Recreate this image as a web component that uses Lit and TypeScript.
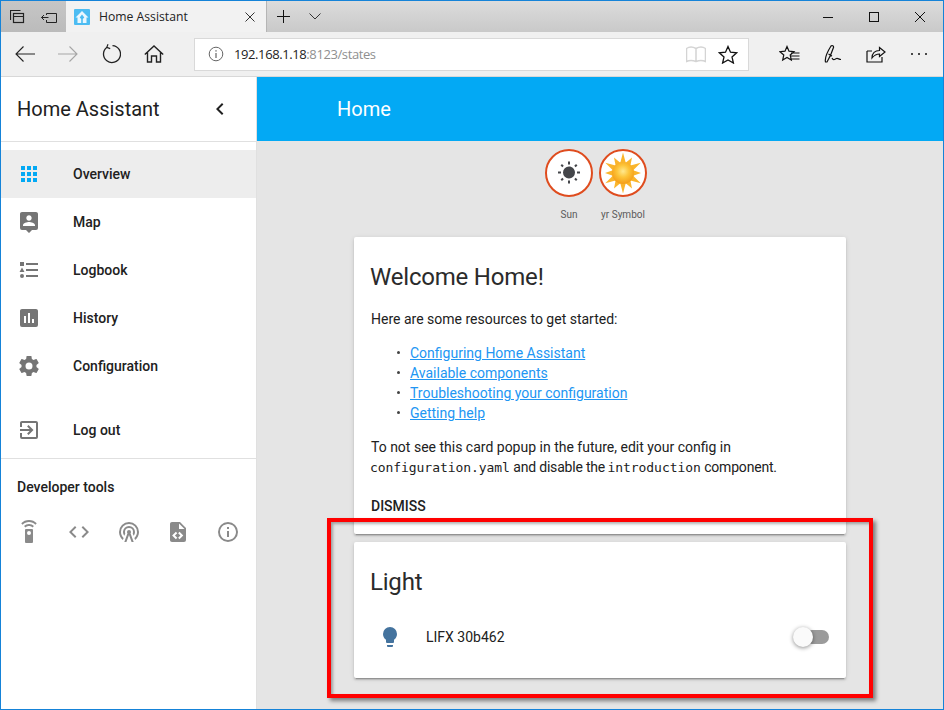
import { LitElement, html, css, svg } from "lit";
import { customElement } from "lit/decorators.js";

const P = {
  apps: "M16,20H20V16H16M16,14H20V10H16M10,8H14V4H10M16,8H20V4H16M10,14H14V10H10M4,14H8V10H4M4,20H8V16H4M10,20H14V16H10M4,8H8V4H4V8Z",
  map: "M18,16H6V15.1C6,13.1 10,12 12,12C14,12 18,13.1 18,15.1M12,5.3C13.5,5.3 14.7,6.5 14.7,8C14.7,9.5 13.5,10.7 12,10.7C10.5,10.7 9.3,9.5 9.3,8C9.3,6.5 10.5,5.3 12,5.3M19,2H5C3.89,2 3,2.89 3,4V18A2,2 0 0,0 5,20H9L12,23L15,20H19A2,2 0 0,0 21,18V4C21,2.89 20.1,2 19,2Z",
  log: "M5,9.5L7.5,14H2.5L5,9.5M3,4H7V8H3V4M5,20A2,2 0 0,0 7,18A2,2 0 0,0 5,16A2,2 0 0,0 3,18A2,2 0 0,0 5,20M9,5V7H21V5H9M9,19H21V17H9V19M9,13H21V11H9V13Z",
  hist: "M17,17H15V13H17M13,17H11V7H13M9,17H7V10H9M19,3H5C3.89,3 3,3.89 3,5V19A2,2 0 0,0 5,21H19A2,2 0 0,0 21,19V5C21,3.89 20.1,3 19,3Z",
  gear: "M12,15.5A3.5,3.5 0 0,1 8.5,12A3.5,3.5 0 0,1 12,8.5A3.5,3.5 0 0,1 15.5,12A3.5,3.5 0 0,1 12,15.5M19.43,12.97C19.47,12.65 19.5,12.33 19.5,12C19.5,11.67 19.47,11.34 19.43,11L21.54,9.37C21.73,9.22 21.78,8.95 21.66,8.73L19.66,5.27C19.54,5.05 19.27,4.96 19.05,5.05L16.56,6.05C16.04,5.66 15.5,5.32 14.87,5.07L14.5,2.42C14.46,2.18 14.25,2 14,2H10C9.75,2 9.54,2.18 9.5,2.42L9.13,5.07C8.5,5.32 7.96,5.66 7.44,6.05L4.95,5.05C4.73,4.96 4.46,5.05 4.34,5.27L2.34,8.73C2.21,8.95 2.27,9.22 2.46,9.37L4.57,11C4.53,11.34 4.5,11.67 4.5,12C4.5,12.33 4.53,12.65 4.57,12.97L2.46,14.63C2.27,14.78 2.21,15.05 2.34,15.27L4.34,18.73C4.46,18.95 4.73,19.03 4.95,18.95L7.44,17.94C7.96,18.34 8.5,18.68 9.13,18.93L9.5,21.58C9.54,21.82 9.75,22 10,22H14C14.25,22 14.46,21.82 14.5,21.58L14.87,18.93C15.5,18.67 16.04,18.34 16.56,17.94L19.05,18.95C19.27,19.03 19.54,18.95 19.66,18.73L21.66,15.27C21.78,15.05 21.73,14.78 21.54,14.63L19.43,12.97Z",
  exit: "M19,3H5C3.89,3 3,3.89 3,5V9H5V5H19V19H5V15H3V19A2,2 0 0,0 5,21H19A2,2 0 0,0 21,19V5C21,3.89 20.1,3 19,3M10.08,15.58L11.5,17L16.5,12L11.5,7L10.08,8.41L12.67,11H3V13H12.67L10.08,15.58Z",
  remote: "M12,0C8.96,0 6.21,1.23 4.22,3.22L5.63,4.63C7.26,3 9.5,2 12,2C14.5,2 16.74,3 18.36,4.64L19.77,3.23C17.79,1.23 15.04,0 12,0M7.05,6.05L8.46,7.46C9.37,6.56 10.62,6 12,6C13.38,6 14.63,6.56 15.54,7.46L16.95,6.05C15.68,4.78 13.93,4 12,4C10.07,4 8.32,4.78 7.05,6.05M12,15A2,2 0 0,1 10,13A2,2 0 0,1 12,11A2,2 0 0,1 14,13A2,2 0 0,1 12,15M15,9H9A1,1 0 0,0 8,10V22A1,1 0 0,0 9,23H15A1,1 0 0,0 16,22V10A1,1 0 0,0 15,9Z",
  code: "M14.6,16.6L19.2,12L14.6,7.4L16,6L22,12L16,18L14.6,16.6M9.4,16.6L4.8,12L9.4,7.4L8,6L2,12L8,18L9.4,16.6Z",
  tower: "M12,10A2,2 0 0,1 14,12C14,12.5 13.82,12.94 13.53,13.29L16.7,22H14.57L12,14.93L9.43,22H7.3L10.47,13.29C10.18,12.94 10,12.5 10,12A2,2 0 0,1 12,10M12,8A4,4 0 0,0 8,12C8,12.5 8.1,13 8.28,13.46L7.4,15.86C6.53,14.81 6,13.47 6,12A6,6 0 0,1 12,6A6,6 0 0,1 18,12C18,13.47 17.47,14.81 16.6,15.86L15.72,13.46C15.9,13 16,12.5 16,12A4,4 0 0,0 12,8M12,4A8,8 0 0,0 4,12C4,14.36 5,16.5 6.64,17.94L5.92,19.94C3.54,18.11 2,15.23 2,12A10,10 0 0,1 12,2A10,10 0 0,1 22,12C22,15.23 20.46,18.11 18.08,19.94L17.36,17.94C19,16.5 20,14.36 20,12A8,8 0 0,0 12,4Z",
  xml: "M13,9H18.5L13,3.5V9M6,2H14L20,8V20A2,2 0 0,1 18,22H6C4.89,22 4,21.1 4,20V4C4,2.89 4.89,2 6,2M6.12,15.5L9.86,19.24L11.28,17.83L8.95,15.5L11.28,13.17L9.86,11.76L6.12,15.5M17.28,15.5L13.54,11.76L12.12,13.17L14.45,15.5L12.12,17.83L13.54,19.24L17.28,15.5Z",
  info: "M11,9H13V7H11M12,20C7.59,20 4,16.41 4,12C4,7.59 7.59,4 12,4C16.41,4 20,7.59 20,12C20,16.41 16.41,20 12,20M12,2A10,10 0 0,0 2,12A10,10 0 0,0 12,22A10,10 0 0,0 22,12A10,10 0 0,0 12,2M11,17H13V11H11V17Z",
  sun: "M3.55,18.54L4.96,19.95L6.76,18.16L5.34,16.74M11,22.45C11.32,22.45 13,22.45 13,22.45V19.5H11M12,5.5A6,6 0 0,0 6,11.5A6,6 0 0,0 12,17.5A6,6 0 0,0 18,11.5C18,8.18 15.31,5.5 12,5.5M20,12.5H23V10.5H20M17.24,18.16L19.04,19.95L20.45,18.54L18.66,16.74M20.45,4.46L19.04,3.05L17.24,4.84L18.66,6.26M13,0.55H11V3.5H13M4,10.5H1V12.5H4M6.76,4.84L4.96,3.05L3.55,4.46L5.34,6.26L6.76,4.84Z",
  bulb: "M12,2A7,7 0 0,0 5,9C5,11.38 6.19,13.47 8,14.74V17A1,1 0 0,0 9,18H15A1,1 0 0,0 16,17V14.74C17.81,13.47 19,11.38 19,9A7,7 0 0,0 12,2M9,21A1,1 0 0,0 10,22H14A1,1 0 0,0 15,21V20H9V21Z",
  chev: "M15.41,16.58L10.83,12L15.41,7.41L14,6L8,12L14,18L15.41,16.58Z",
};

const icon = (d: string, cls = "mi") =>
  html`<svg class=${cls} viewBox="0 0 24 24"><path d=${d}></path></svg>`;

const stroke = (w: number, h: number, body: unknown, color = "#222") =>
  html`<svg width=${w} height=${h} viewBox="0 0 ${w} ${h}" fill="none" stroke=${color} stroke-width="1">${body}</svg>`;

const NAV = [
  ["Overview", P.apps, true],
  ["Map", P.map, false],
  ["Logbook", P.log, false],
  ["History", P.hist, false],
  ["Configuration", P.gear, false],
] as const;

const star = (() => {
  const pts: string[] = [];
  for (let i = 0; i < 24; i++) {
    const a = (i * Math.PI) / 12 - Math.PI / 2;
    const big = i % 4 === 0;
    const r = i % 2 ? 10.5 : big ? 20.5 : 18;
    pts.push(`${(22 + r * Math.cos(a)).toFixed(2)},${(22 + r * Math.sin(a)).toFixed(2)}`);
  }
  return pts.join(" ");
})();

@customElement("app-root")
export class AppRoot extends LitElement {
  static styles = css`
    :host {
      display: block;
      position: relative;
      box-sizing: border-box;
      width: 944px;
      height: 710px;
      border: 1px solid #1583d8;
      overflow: hidden;
      font-family: Roboto, "Liberation Sans", sans-serif;
      color: #212121;
      background: #e5e5e5;
    }
    .page { display: flex; flex-direction: column; height: 100%; }
    .titlebar {
      display: flex; height: 31px; flex: none;
      background: linear-gradient(#dcdcdc, #c9c9c9);
    }
    .tabtools {
      width: 65px; display: flex; align-items: center; background: linear-gradient(#c6c6c6, #bbb);
      padding-left: 9px; gap: 16px; box-sizing: border-box;
    }
    .tab {
      width: 200px; background: #f2f2f2; display: flex; align-items: center;
      box-sizing: border-box; padding-left: 8px;
      font: 12.2px "Open Sans", "Noto Sans", sans-serif; color: #222;
    }
    .tab .name { margin-left: 9px; flex: 1; }
    .tab .x { margin-right: 11px; display: flex; }
    .newtab { display: flex; align-items: center; padding-left: 10px; gap: 19px; border-left: 1px solid #b5b5b5; }
    .winbtns { margin-left: auto; display: flex; align-items: center; gap: 36px; padding-right: 18px; }
    .toolbar {
      height: 44px; flex: none; background: #f0f0f0; display: flex; align-items: center;
      position: relative; border-bottom: 1px solid #d8d8d8; box-sizing: content-box;
    }
    .nav-l { display: flex; align-items: center; width: 193px; padding-left: 14px; gap: 23px; box-sizing: border-box; }
    .addr {
      width: 555px; height: 33px; background: #fff; border: 1px solid #d9d9d9; box-sizing: border-box;
      display: flex; align-items: center; padding-left: 13px;
      font: 13px "Open Sans", "Noto Sans", sans-serif; color: #222;
    }
    .addr .url { margin-left: 10px; flex: 1; letter-spacing: -0.4px; }
    .addr .url span { color: #8f8f8f; }
    .addr .r { display: flex; align-items: center; gap: 12px; margin-right: 10px; }
    .nav-r { display: flex; align-items: center; gap: 24px; margin-left: 30px; }
    .app { flex: 1; display: flex; min-height: 0; }
    .side {
      width: 256px; flex: none; background: #fff; border-right: 1px solid #e0e0e0; box-sizing: border-box;
      display: flex; flex-direction: column;
    }
    .side-h {
      height: 64px; flex: none; border-bottom: 1px solid #e0e0e0; display: flex; align-items: center;
      padding: 0 24px 0 16px; justify-content: space-between; box-sizing: content-box;
      font-size: 20px; color: #212121;
    }
    .side-h .mi { width: 24px; height: 24px; fill: #212121; }
    .navlist { padding-top: 8px; display: flex; flex-direction: column; }
    .item {
      height: 48px; display: flex; align-items: center; padding-left: 16px;
      font-size: 14px; font-weight: 500; color: #212121;
    }
    .item .mi { width: 24px; height: 24px; fill: #757575; margin-right: 32px; }
    .item.sel { background: #ededed; }
    .item.sel .mi { fill: #03a9f4; }
    .logout { margin-top: 16px; }
    .div { height: 1px; background: #e0e0e0; margin-top: 4px; }
    .dev-t { font-size: 14px; font-weight: 500; padding: 20px 0 0 16px; line-height: 16px; }
    .dev-i { display: flex; padding: 25px 0 0 16px; gap: 25.75px; }
    .dev-i .mi { width: 24px; height: 24px; fill: #8a8a8a; }
    .main { flex: 1; display: flex; flex-direction: column; min-width: 0; }
    .hdr {
      height: 64px; flex: none; background: #03a9f4; color: #fff; font-size: 20px;
      display: flex; align-items: center; padding-left: 80px;
    }
    .content { flex: 1; display: flex; flex-direction: column; align-items: center; }
    .badges { display: flex; padding: 8px 8px 0 0; height: 96px; box-sizing: border-box; }
    .badge { width: 54px; display: flex; flex-direction: column; align-items: center; }
    .circle {
      width: 48px; height: 48px; box-sizing: border-box; border: 2px solid #df4c1e; border-radius: 50%;
      background: #fff; display: flex; align-items: center; justify-content: center;
    }
    .circle .mi { width: 24px; height: 24px; fill: #44464a; }
    .blabel { font-size: 10px; line-height: 12px; margin-top: 12px; color: #5a5a5a; white-space: nowrap; }
    .card {
      width: 492px; background: #fff; border-radius: 2px; box-sizing: border-box;
      box-shadow: 0 2px 2px rgba(0,0,0,.14), 0 1px 5px rgba(0,0,0,.12), 0 3px 1px -2px rgba(0,0,0,.2);
      margin-bottom: 8px;
    }
    h2 { margin: 0; font-weight: 400; font-size: 24px; line-height: 32px; padding: 24px 16px 0; color: #2b2b2b; letter-spacing: -.2px; }
    .body { padding: 16px 17px 0; font-size: 14px; line-height: 20px; color: #212121; }
    .body p { margin: 0; }
    .body ul { margin: 14px 0; padding: 0 0 0 39px; list-style: none; }
    .body li { position: relative; }
    .body li::before {
      content: ""; position: absolute; left: -13px; top: 8px; width: 3px; height: 3px; border-radius: 50%; background: #444;
    }
    a { color: #2196f3; text-decoration: underline; }
    code { font-family: "DejaVu Sans Mono", monospace; font-size: 13px; letter-spacing: -.06px; margin-left: -1px; }
    .tight { letter-spacing: -.2px; }
    .actions { padding: 18px 17px 18px; font-size: 14px; font-weight: 500; line-height: 20px; }
    .row { display: flex; align-items: center; height: 40px; margin: 19px 0 21px; padding: 0 17px 0 24px; font-size: 14px; }
    .row .mi { width: 24px; height: 24px; fill: #44739e; margin-right: 24px; }
    .row .nm { flex: 1; }
    .sw { position: relative; height: 14px; border-radius: 7px; background: #9b9b9b; flex: none; width: 24px; }
    .sw::before {
      content: ""; position: absolute; left: -12px; top: -3px; width: 20px; height: 20px; border-radius: 50%;
      background: #fafafa; box-shadow: 0 1px 4px rgba(0,0,0,.45);
    }
    .callout {
      position: absolute; left: 326px; top: 517px; width: 546px; height: 180px; box-sizing: border-box;
      border: 4px solid #f00; box-shadow: 3px 3px 4px rgba(0,0,0,.45), inset 2px 2px 3px rgba(0,0,0,.3);
      pointer-events: none;
    }
  `;

  render() {
    return html`
      <div class="page">
        <div class="titlebar">
          <div class="tabtools">
            ${stroke(15, 14, svg`<rect x="3.5" y="3.5" width="10" height="9" stroke-width="1.2"/><path d="M.5 10V.5h10M3.5 6.5h10" stroke-width="1.2"/>`)}
            ${stroke(17, 12, svg`<path d="M5.5 2.5h10v9h-10V9M.5 6.500h7M3 4 .5 6.500 3 9M5.500 2.500V4"/>`)}
          </div>
          <div class="tab">
            <svg width="16" height="16" viewBox="0 0 16 16"><rect width="16" height="16" rx="1" fill="#4cbcf2"></rect><path d="M8 2 14.500 8.500H12.500V14H3.500V8.500H1.500z" fill="#eaf7fe"></path><path d="M8 5.500 10.300 8.500 8.800 10V14H7.200V10L5.700 8.500z" fill="#4cbcf2"></path></svg>
            <span class="name">Home Assistant</span>
            <span class="x">${stroke(10, 10, svg`<path d="M.5.5l9 9M9.500.5l-9 9" stroke="#333"/>`)}</span>
          </div>
          <div class="newtab">
            ${stroke(13, 13, svg`<path d="M6.500 0v13M0 6.500h13" stroke="#111"/>`)}
            ${stroke(12, 7, svg`<path d="M.5.5 6 6 11.500.5" stroke="#333"/>`)}
          </div>
          <div class="winbtns">
            ${stroke(10, 10, svg`<path d="M0 5.500h10" stroke="#111"/>`)}
            ${stroke(10, 10, svg`<rect x=".5" y=".5" width="9" height="9" stroke="#111"/>`)}
            ${stroke(10, 10, svg`<path d="M0 0l10 10M10 0 0 10" stroke="#111"/>`)}
          </div>
        </div>
        <div class="toolbar">
          <div class="nav-l">
            ${stroke(20, 16, svg`<path d="M20 8H1M8.500.5 1 8l7.500 7.500" stroke-width="1.100"/>`)}
            ${stroke(20, 16, svg`<path d="M0 8h19M11.500.5 19 8l-7.500 7.500" stroke-width="1.100" stroke="#a5a5a5"/>`)}
            ${stroke(20, 20, svg`<path d="M6 3.200A8.500 8.500 0 1 0 11.500 1.600" stroke-width="1.300"/><path d="M7 .3 5.800 3.400 9.200 4.600" stroke-width="1.200"/>`)}
            ${stroke(20, 18, svg`<path d="M.8 9.500 10 1l9.200 8.500M3.500 7.500V17h4v-6h5v6h4V7.500" stroke-width="1.400"/>`)}
          </div>
          <div class="addr">
            ${stroke(16, 16, svg`<circle cx="8" cy="8" r="6.800" stroke="#666"/><path d="M8 7v5M8 4.200v1.400" stroke="#444"/>`)}
            <span class="url">192.168.1.18<span>:8123/states</span></span>
            <span class="r">
              ${stroke(20, 17, svg`<path d="M.5 2.500C3 .8 7 .8 10 2.500c3-1.700 7-1.700 9.500 0v13c-2.500-1.200-6.500-1.200-9.500 0-3-1.200-7-1.200-9.500 0zM10 2.500v13" stroke="#d4d4d4" stroke-width="1.500"/>`)}
              ${stroke(20, 19, svg`<path d="M10 1.500l2.500 5.700 6.200.6-4.700 4.100 1.400 6.100L10 14.900l-5.400 3.100 1.400-6.100-4.700-4.100 6.200-.6z" stroke="#111" stroke-width="1.300"/>`)}
            </span>
          </div>
          <div class="nav-r">
            ${stroke(21, 18, svg`<path d="M8 1.500l2 4.700 5 .5-3.800 3.300 1.100 5L8 12.400l-4.300 2.600 1.100-5L1 6.700l5-.5zM12 8h8.500M11.500 11h9M12 14h8.500" stroke="#111" stroke-width="1.200"/>`)}
            ${stroke(18, 20, svg`<path d="M1.500 18C.5 14 4.500 6 7 2c1-1 3 0 2.500 1.500C8 8 5.500 14 3 18zM4.500 10l3.500 2M8 14c1.500 3 3 1 4.500.5 1.500-.5 2.500 1 4.500 1" stroke="#111" stroke-width="1.200"/>`)}
            ${stroke(20, 18, svg`<path d="M1 6v11h15v-5M1 6h5" stroke="#111" stroke-width="1.200"/><path d="M6 13c0-5 3-7.500 7.500-7.500V2.500L19 7l-5.500 4.500V9C10 9 8 10.500 6 13z" stroke="#111" stroke-width="1.200"/>`)}
            ${stroke(18, 4, svg`<circle cx="2" cy="2" r="1" fill="#111" stroke="none"/><circle cx="9" cy="2" r="1" fill="#111" stroke="none"/><circle cx="16" cy="2" r="1" fill="#111" stroke="none"/>`)}
          </div>
        </div>
        <div class="app">
          <aside class="side">
            <div class="side-h"><span>Home Assistant</span>${icon(P.chev)}</div>
            <div class="navlist">
              ${NAV.map(([t, d, s]) => html`<div class="item ${s ? "sel" : ""}">${icon(d)}<span>${t}</span></div>`)}
              <div class="item logout">${icon(P.exit)}<span>Log out</span></div>
            </div>
            <div class="div"></div>
            <div class="dev-t">Developer tools</div>
            <div class="dev-i">
              ${[P.remote, P.code, P.tower, P.xml, P.info].map((d) => icon(d))}
            </div>
          </aside>
          <main class="main">
            <div class="hdr">Home</div>
            <div class="content">
              <div class="badges">
                <div class="badge">
                  <div class="circle">${icon(P.sun)}</div>
                  <div class="blabel">Sun</div>
                </div>
                <div class="badge">
                  <div class="circle">
                    <svg width="44" height="44" viewBox="0 0 44 44">
                      <defs>
                        <radialGradient id="s" cx=".5" cy=".42" r=".55">
                          <stop offset="0" stop-color="#ffe98f"></stop>
                          <stop offset=".5" stop-color="#fdc53a"></stop>
                          <stop offset="1" stop-color="#f5a01a"></stop>
                        </radialGradient>
                      </defs>
                      <polygon points=${star} fill="#fab52c"></polygon>
                      <circle cx="22" cy="22" r="11" fill="url(#s)"></circle>
                    </svg>
                  </div>
                  <div class="blabel">yr Symbol</div>
                </div>
              </div>
              <section class="card">
                <h2>Welcome Home!</h2>
                <div class="body">
                  <p>Here are some resources to get started:</p>
                  <ul>
                    <li><a>Configuring Home Assistant</a></li>
                    <li><a>Available components</a></li>
                    <li><a>Troubleshooting your configuration</a></li>
                    <li><a>Getting help</a></li>
                  </ul>
                  <p>To not see this card popup in the future, edit your config in <code>configuration.yaml</code> <span class="tight">and disable the</span> <code>introduction</code> <span class="tight">component.</span></p>
                </div>
                <div class="actions">DISMISS</div>
              </section>
              <section class="card">
                <h2>Light</h2>
                <div class="row">${icon(P.bulb)}<span class="nm">LIFX 30b462</span><span class="sw"></span></div>
              </section>
            </div>
          </main>
        </div>
      </div>
      <div class="callout"></div>
    `;
  }
}
